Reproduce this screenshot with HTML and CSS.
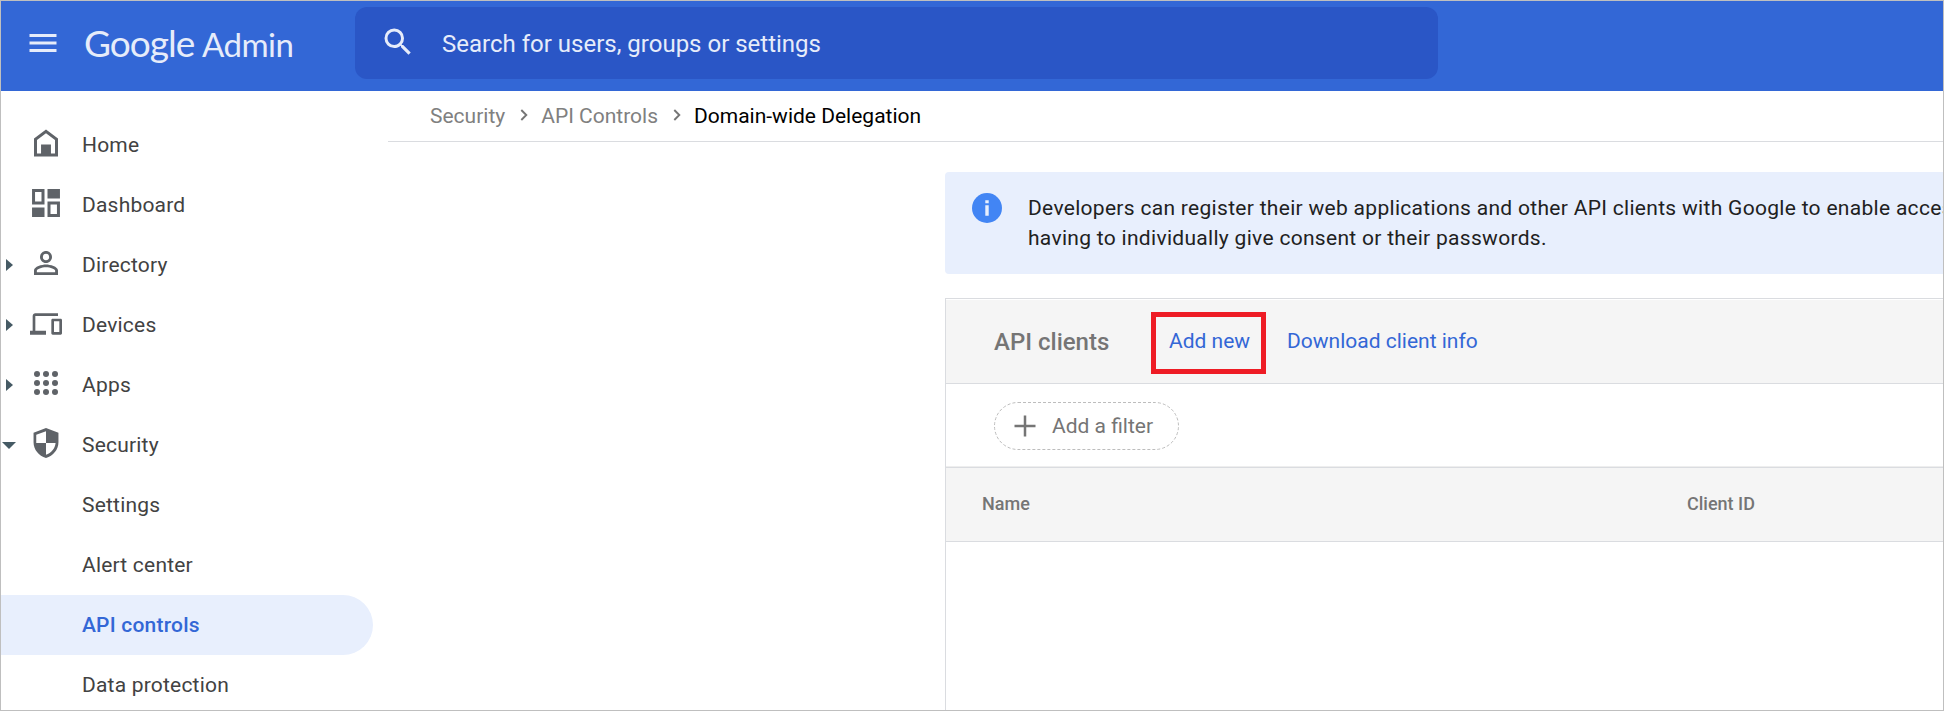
FILE: index.html
```html
<!DOCTYPE html>
<html lang="en">
<head>
<meta charset="utf-8">
<title>Google Admin</title>
<link rel="stylesheet" href="styles.css">
</head>
<body>
<div class="app">
  <header class="topbar">
    <svg class="menu" viewBox="0 0 24 24"><path d="M3 18h18v-2H3v2zm0-5h18v-2H3v2zm0-7v2h18V6H3z"/></svg>
    <div class="brand"><span class="google">Google</span><span class="admin">Admin</span></div>
    <div class="search">
      <svg class="search-icon" viewBox="0 0 24 24"><path d="M15.5 14h-.79l-.28-.27A6.471 6.471 0 0 0 16 9.5 6.5 6.5 0 1 0 9.5 16c1.61 0 3.09-.59 4.23-1.57l.27.28v.79l5 4.99L20.49 19l-4.99-5zm-6 0C7.01 14 5 11.99 5 9.5S7.01 5 9.5 5 14 7.01 14 9.5 11.99 14 9.5 14z"/></svg>
      <span class="placeholder">Search for users, groups or settings</span>
    </div>
  </header>
  <div class="body">
    <nav class="sidebar">
      <a class="item"><span class="arrow"></span><svg viewBox="0 0 24 24"><path fill-rule="evenodd" d="M12 3L4 9v12h16V9zM18 19h-2.7v-6H8.700v6H6v-9l6-4.500 6 4.500z"/></svg><span>Home</span></a>
      <a class="item"><span class="arrow"></span><svg viewBox="0 0 24 24"><path fill-rule="evenodd" d="M2.700 2.700h8.300v10.300H2.700zM4.700 4.700v6.300H9V4.700zM13 2.700h8.300V9H13zM2.700 15H11v6.300H2.700zM13 11h8.300v10.300H13zM15 13v6.300h4.300V13z"/></svg><span>Dashboard</span></a>
      <a class="item"><span class="arrow"><i class="right"></i></span><svg viewBox="0 0 24 24"><path d="M12 5.900a2.100 2.100 0 1 1 0 4.200 2.100 2.100 0 0 1 0-4.200m0 9c2.970 0 6.100 1.460 6.100 2.100v1.100H5.900V17c0-.64 3.130-2.100 6.100-2.100M12 4C9.790 4 8 5.790 8 8s1.790 4 4 4 4-1.790 4-4-1.790-4-4-4zm0 9c-2.670 0-8 1.340-8 4v3h16v-3c0-2.660-5.330-4-8-4z"/></svg><span>Directory</span></a>
      <a class="item"><span class="arrow"><i class="right"></i></span><svg class="devices" viewBox="0 0 24 24"><path d="M4 6h17V4H4c-1.100 0-2 .9-2 2v11H0v3h12v-3H4V6zm19 2h-6c-.55 0-1 .45-1 1v10c0 .55.45 1 1 1h6c.55 0 1-.45 1-1V9c0-.55-.45-1-1-1zm-1 10h-4v-8h4v8z"/></svg><span>Devices</span></a>
      <a class="item"><span class="arrow"><i class="right"></i></span><svg viewBox="0 0 24 24"><circle cx="6" cy="6" r="2"/><circle cx="12" cy="6" r="2"/><circle cx="18" cy="6" r="2"/><circle cx="6" cy="12" r="2"/><circle cx="12" cy="12" r="2"/><circle cx="18" cy="12" r="2"/><circle cx="6" cy="18" r="2"/><circle cx="12" cy="18" r="2"/><circle cx="18" cy="18" r="2"/></svg><span>Apps</span></a>
      <a class="item"><span class="arrow"><i class="down"></i></span><svg viewBox="0 0 24 24"><path fill-rule="evenodd" d="M12 2L3.700 5.200v6.300c0 4.900 3.500 9.100 8.300 10.500 4.800-1.400 8.300-5.600 8.300-10.500V5.200zM12 4.100V12h6.400c-.4 3.600-2.900 6.800-6.400 7.900V12H5.500V6.500z"/></svg><span>Security</span></a>
      <a class="item sub">Settings</a>
      <a class="item sub">Alert center</a>
      <a class="item sub active">API controls</a>
      <a class="item sub">Data protection</a>
    </nav>
    <main class="main">
      <div class="crumbs">
        <span class="c1">Security</span>
        <svg viewBox="0 0 8 12"><path d="M1.300 1l5 5-5 5"/></svg>
        <span class="c2">API Controls</span>
        <svg viewBox="0 0 8 12"><path d="M1.300 1l5 5-5 5"/></svg>
        <span class="current">Domain-wide Delegation</span>
      </div>
      <div class="content">
        <section class="banner">
          <svg viewBox="0 0 30 30"><circle cx="15" cy="15" r="15" fill="#4285f4"/><path d="M13.300 7.200h3.400v3h-3.400zM13.300 12.200h3.400v10.600h-3.400z" fill="#e8effd"/></svg>
          <p>Developers can register their web applications and other API clients with Google to enable access to data without<br>having to individually give consent or their passwords.</p>
        </section>
        <section class="card">
          <div class="card-head">
            <h2>API clients</h2>
            <a class="add">Add new</a>
            <a class="download">Download client info</a>
          </div>
          <div class="filter-row">
            <div class="chip">
              <svg class="outline" viewBox="0 0 185 48"><rect x=".5" y=".5" width="184" height="47" rx="23.500"/></svg>
              <svg class="plus" viewBox="0 0 22 22"><path d="M11 .5v21M.5 11h21"/></svg>
              <span>Add a filter</span>
            </div>
          </div>
          <div class="table-head"><span class="name">Name</span><span class="client">Client ID</span></div>
        </section>
      </div>
    </main>
  </div>
</div>
</body>
</html>
```
FILE: styles.css
```css
* { box-sizing: border-box; }
body { margin: 0; font-family: Roboto, "Liberation Sans", sans-serif; font-size: 21px; background: #fff; }
.app { width: 1944px; height: 711px; border: 1px solid #bfbfbf; overflow: hidden; display: flex; flex-direction: column; }
.topbar { flex: none; height: 90px; background: #3367d6; display: flex; align-items: flex-start; color: #e6ecfa; }
.menu { width: 36px; height: 36px; margin: 24px 0 0 24px; fill: #e6ecfa; }
.brand { width: 271px; margin: 18px 0 0 23px; display: flex; align-items: baseline; font-family: Lato, "Open Sans", sans-serif; line-height: 48px; white-space: nowrap; }
.google { font-size: 37px; width: 118px; letter-spacing: -1px; }
.admin { font-size: 33px; letter-spacing: -0.5px; padding-top: 1px; }
.search { width: 1083px; height: 72px; margin-top: 6px; border-radius: 12px; background: #2a56c6; display: flex; align-items: center; }
.search-icon { width: 36px; height: 36px; margin: 0 0 2px 25px; fill: #e6ecfa; }
.placeholder { margin-left: 26px; font-size: 24px; line-height: 30px; letter-spacing: 0; padding-top: 1px; }
.body { flex: 1; display: flex; min-height: 0; }
.sidebar { flex: none; width: 387px; padding-top: 24px; }
.item { height: 60px; width: 372px; display: flex; align-items: center; color: #424242; letter-spacing: 0.2px; }
.item svg { flex: none; width: 36px; height: 36px; margin: 0 18px 4px 0; fill: #5f6368; }
.item svg.devices { width: 32px; height: 32px; margin: 0 20px 3px 2px; overflow: visible; }
.arrow { flex: none; width: 27px; }
.arrow i { display: block; width: 0; height: 0; }
.right { border-left: 7px solid #455a64; border-top: 6.500px solid transparent; border-bottom: 6.500px solid transparent; margin-left: 5px; }
.down { border-top: 7px solid #455a64; border-left: 7px solid transparent; border-right: 7px solid transparent; margin-left: 1px; margin-top: 1px; }
.sub { padding-left: 81px; }
.active { background: #e8effd; color: #3367d6; font-weight: 500; border-radius: 0 30px 30px 0; }
.main { flex: 1; min-width: 0; }
.crumbs { height: 51px; border-bottom: 1px solid #dadce0; padding-left: 42px; display: flex; align-items: center; color: #808080; white-space: nowrap; }
.crumbs svg { width: 8px; height: 12px; margin: 0 13px 2px 15px; fill: none; stroke: #757575; stroke-width: 1.900; }
.crumbs .current { color: #000; }
.content { padding: 30px 0 0 557px; }
.banner { width: 1100px; height: 102px; background: #e8effd; border-radius: 4px; display: flex; padding: 21px 0 0 27px; }
.banner svg { flex: none; width: 30px; height: 30px; }
.banner p { margin: 0 0 0 26px; color: #212121; line-height: 30px; white-space: nowrap; letter-spacing: 0.3px; }
.card { width: 1100px; height: 440px; margin-top: 24px; border: 1px solid #dadce0; padding-top: 1px; }
.card-head { height: 84px; background: #f5f5f5; border-bottom: 1px solid #dadce0; display: flex; align-items: center; color: #3367d6; white-space: nowrap; }
.card-head h2 { margin: 0 0 0 48px; width: 157px; font-size: 24px; font-weight: 500; color: #757575; }
.add { width: 115px; height: 62px; border: 5px solid #ee1c25; display: flex; align-items: center; justify-content: center; padding: 0 0 4px 2px; margin-top: 2px; }
.download { margin: 0 0 2px 21px; }
.filter-row { height: 83px; padding: 18px 0 0 48px; border-bottom: 1px solid #eee; }
.chip { position: relative; width: 185px; height: 48px; display: flex; align-items: center; color: #757575; white-space: nowrap; }
.outline { position: absolute; left: 0; top: 0; width: 185px; height: 48px; fill: none; stroke: #bdbdbd; stroke-dasharray: 3 2; }
.plus { width: 22px; height: 22px; margin: 0 16px 0 20px; stroke: #757575; stroke-width: 2.500; fill: none; }
.table-head { height: 75px; background: #f5f5f5; border-top: 1px solid #dadce0; border-bottom: 1px solid #dadce0; display: flex; align-items: center; font-size: 18px; font-weight: 500; color: #757575; padding: 0 0 2px 36px; }
.name { width: 705px; }
```
